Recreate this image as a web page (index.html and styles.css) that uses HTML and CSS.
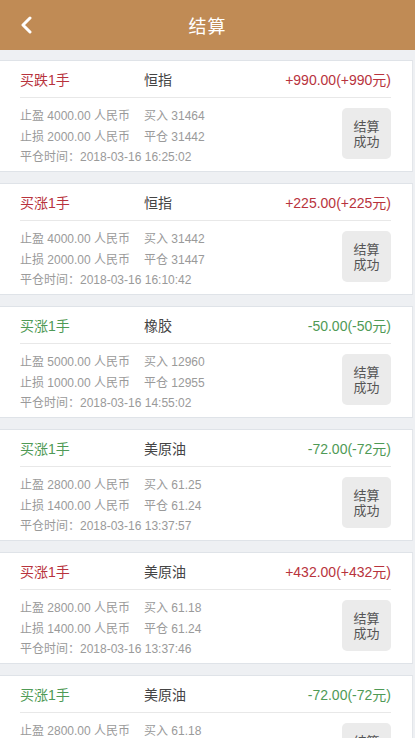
FILE: index.html
```html
<!DOCTYPE html>
<html lang="zh-CN">
<head>
<meta charset="utf-8">
<title>结算</title>
<link rel="stylesheet" href="styles.css">
</head>
<body>
<header class="topbar">
  <span class="back"><svg width="14" height="18" viewBox="0 0 14 18"><polyline points="10,2 3,9 10,16" fill="none" stroke="#fff" stroke-width="3" stroke-linecap="round" stroke-linejoin="round"/></svg></span>
  <h1 class="title">结算</h1>
</header>
<main class="list">
  <section class="card">
    <div class="head"><span class="dir up">买跌1手</span><span class="name">恒指</span><span class="amt up">+990.00(+990元)</span></div>
    <div class="body">
      <div class="info">
        <div class="row"><span class="c1">止盈 4000.00 人民币</span><span>买入 31464</span></div>
        <div class="row"><span class="c1">止损 2000.00 人民币</span><span>平仓 31442</span></div>
        <div class="row">平仓时间：2018-03-16 16:25:02</div>
      </div>
      <div class="btn">结算<br>成功</div>
    </div>
  </section>
  <section class="card">
    <div class="head"><span class="dir up">买涨1手</span><span class="name">恒指</span><span class="amt up">+225.00(+225元)</span></div>
    <div class="body">
      <div class="info">
        <div class="row"><span class="c1">止盈 4000.00 人民币</span><span>买入 31442</span></div>
        <div class="row"><span class="c1">止损 2000.00 人民币</span><span>平仓 31447</span></div>
        <div class="row">平仓时间：2018-03-16 16:10:42</div>
      </div>
      <div class="btn">结算<br>成功</div>
    </div>
  </section>
  <section class="card">
    <div class="head"><span class="dir down">买涨1手</span><span class="name">橡胶</span><span class="amt down">-50.00(-50元)</span></div>
    <div class="body">
      <div class="info">
        <div class="row"><span class="c1">止盈 5000.00 人民币</span><span>买入 12960</span></div>
        <div class="row"><span class="c1">止损 1000.00 人民币</span><span>平仓 12955</span></div>
        <div class="row">平仓时间：2018-03-16 14:55:02</div>
      </div>
      <div class="btn">结算<br>成功</div>
    </div>
  </section>
  <section class="card">
    <div class="head"><span class="dir down">买涨1手</span><span class="name">美原油</span><span class="amt down">-72.00(-72元)</span></div>
    <div class="body">
      <div class="info">
        <div class="row"><span class="c1">止盈 2800.00 人民币</span><span>买入 61.25</span></div>
        <div class="row"><span class="c1">止损 1400.00 人民币</span><span>平仓 61.24</span></div>
        <div class="row">平仓时间：2018-03-16 13:37:57</div>
      </div>
      <div class="btn">结算<br>成功</div>
    </div>
  </section>
  <section class="card">
    <div class="head"><span class="dir up">买涨1手</span><span class="name">美原油</span><span class="amt up">+432.00(+432元)</span></div>
    <div class="body">
      <div class="info">
        <div class="row"><span class="c1">止盈 2800.00 人民币</span><span>买入 61.18</span></div>
        <div class="row"><span class="c1">止损 1400.00 人民币</span><span>平仓 61.24</span></div>
        <div class="row">平仓时间：2018-03-16 13:37:46</div>
      </div>
      <div class="btn">结算<br>成功</div>
    </div>
  </section>
  <section class="card">
    <div class="head"><span class="dir down">买涨1手</span><span class="name">美原油</span><span class="amt down">-72.00(-72元)</span></div>
    <div class="body">
      <div class="info">
        <div class="row"><span class="c1">止盈 2800.00 人民币</span><span>买入 61.18</span></div>
        <div class="row"><span class="c1">止损 1400.00 人民币</span><span>平仓 61.24</span></div>
        <div class="row">平仓时间：2018-03-16 13:37:40</div>
      </div>
      <div class="btn">结算<br>成功</div>
    </div>
  </section>
</main>
</body>
</html>
```
FILE: styles.css
```css
* { box-sizing: border-box; }
html, body { margin: 0; padding: 0; }
body {
  background: #eef0f3;
  font-family: "Liberation Sans", "Noto Sans CJK SC", sans-serif;
  color: #333;
  width: 415px;
  height: 738px;
  overflow: hidden;
}
.topbar {
  height: 50px;
  background: #c08b55;
  display: flex;
  align-items: center;
  justify-content: center;
  position: relative;
}
.back {
  position: absolute;
  left: 20px;
  top: 16px;
  display: flex;
}
.title {
  margin: 0;
  font-size: 18px;
  font-weight: normal;
  color: #fff;
  letter-spacing: 1px;
}
.list {
  padding-top: 10px;
  display: flex;
  flex-direction: column;
  gap: 11px;
  width: 413px;
}
.card {
  background: #fff;
  border-top: 1px solid #dfe3e8;
  border-bottom: 1px solid #dfe3e8;
  border-right: 1px solid #e3e6ea;
}
.head {
  margin: 0 21px 0 20px;
  height: 37px;
  border-bottom: 1px solid #e8e8e8;
  display: flex;
  align-items: center;
  font-size: 14px;
}
.dir { width: 124px; }
.name { flex: 1; color: #444; }
.up { color: #b8333d; }
.down { color: #4f9a56; }
.body {
  margin: 0 21px 0 20px;
  height: 73px;
  padding: 8px 0 3.5px;
  display: flex;
  justify-content: space-between;
  align-items: center;
}
.info {
  font-size: 12px;
  color: #9a9a9a;
  line-height: 20.5px;
}
.row { display: flex; }
.c1 { width: 124px; }
.btn {
  width: 49px;
  height: 51px;
  border-radius: 5px;
  background: #ebebeb;
  color: #555;
  font-size: 13px;
  line-height: 15px;
  display: flex;
  align-items: center;
  justify-content: center;
  text-align: center;
  margin-top: -6px;
}
```
